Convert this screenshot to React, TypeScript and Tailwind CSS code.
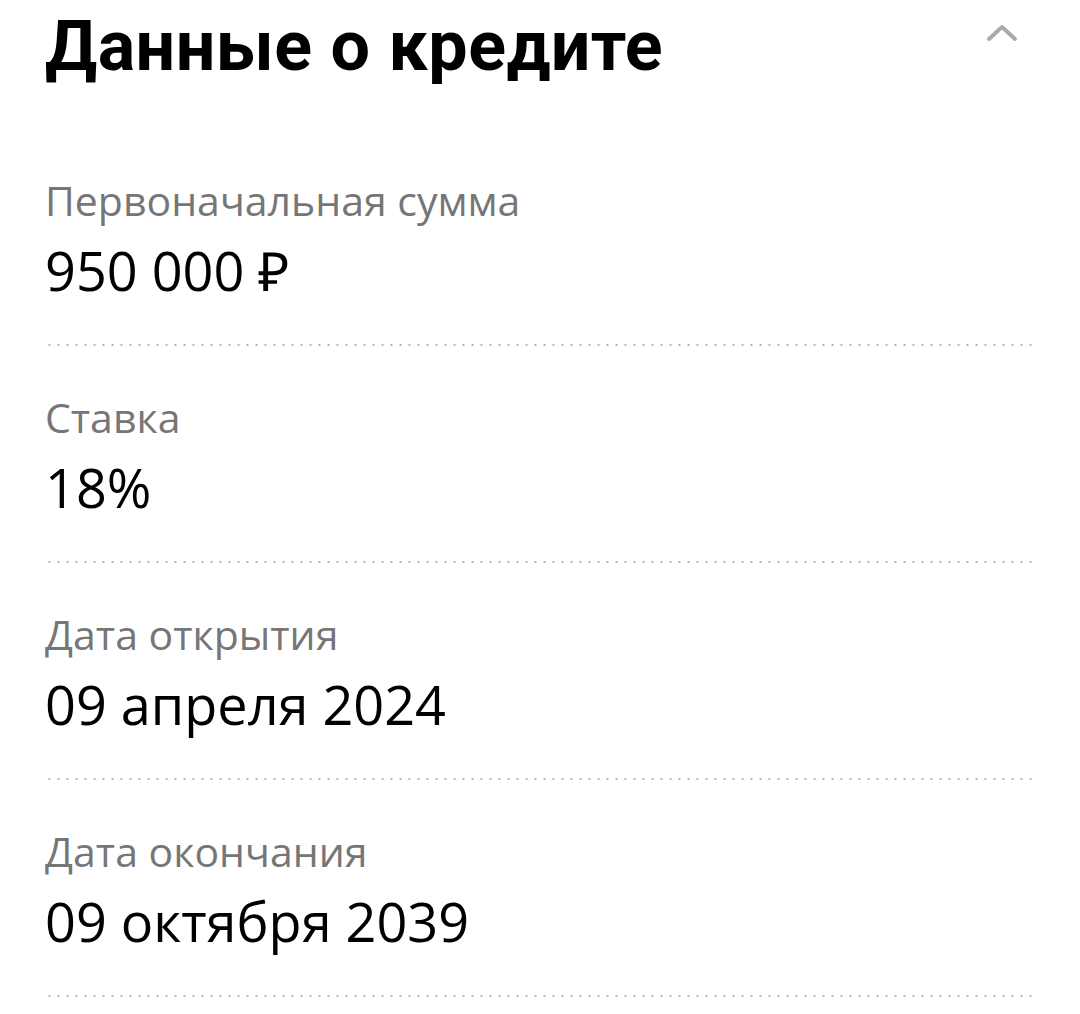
const rows = [
  { label: "Первоначальная сумма", value: "950 000 ₽" },
  { label: "Ставка", value: "18%" },
  { label: "Дата открытия", value: "09 апреля 2024" },
  { label: "Дата окончания", value: "09 октября 2039" },
]

const DottedLine = () => (
  <div className="h-[2px] w-full bg-[radial-gradient(circle,#b0b0b0_1px,transparent_1.2px)] bg-[length:9px_2px] bg-repeat-x" />
)

const App = () => {
  return (
    <div className="w-[1080px] h-[1014px] bg-white px-[45px] overflow-hidden">
      {/* header */}
      <div className="flex items-start justify-between pt-[6px]">
        <h1 className="font-['Roboto'] font-bold text-[70px] leading-[80px] text-black tracking-[0.5px]">
          Данные о кредите
        </h1>
        <svg width="34" height="22" viewBox="0 0 34 22" className="mt-[16px] mr-[16px]">
          <path d="M4 17 L17 5 L30 17" fill="none" stroke="#aaaaaa" strokeWidth="4" strokeLinecap="round" strokeLinejoin="round" />
        </svg>
      </div>

      <div className="mt-[89px] flex flex-col">
        {rows.map((r) => (
          <div key={r.label} className="flex flex-col">
            <div className="font-['Open_Sans'] text-[41px] leading-[50px] text-[#767676]">{r.label}</div>
            <div className="mt-[15px] font-['Open_Sans'] text-[54px] leading-[60px] text-black">{r.value}</div>
            <div className="mt-[44px] mb-[46px]">
              <DottedLine />
            </div>
          </div>
        ))}
      </div>
    </div>
  )
}

export default App
